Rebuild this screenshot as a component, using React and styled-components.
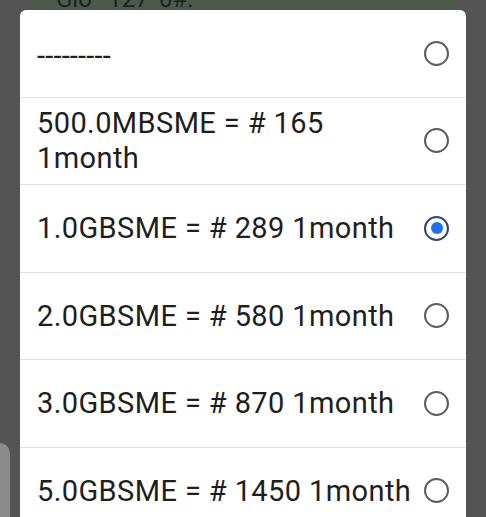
import React, { useState } from "react";
import styled, { createGlobalStyle } from "styled-components";

const Global = createGlobalStyle`
  html, body { margin: 0; padding: 0; background: #545454; }
  * { box-sizing: border-box; }
`;

const Page = styled.div`
  position: relative;
  width: 486px;
  height: 517px;
  overflow: hidden;
  background: #545454;
  font-family: Roboto, "Noto Sans", sans-serif;
`;

const Backdrop = styled.div`
  display: flex;
  flex-direction: column;
  gap: 13px;
`;

const BehindCard = styled.div`
  margin: 0 31px 0 32px;
  height: 430px;
  background: #4a5a4c;
  overflow: hidden;
`;

const BehindText = styled.div`
  margin: -15px 0 0 24px;
  font-size: 24px;
  line-height: 28px;
  color: #1c241d;
`;

const SideTab = styled.div`
  width: 10px;
  height: 90px;
  background: #8a8a8a;
  border-top-right-radius: 14px;
`;

const Dialog = styled.div`
  position: absolute;
  top: 10px;
  left: 20px;
  width: 446px;
  background: #ffffff;
  border-radius: 6px 6px 0 0;
  display: flex;
  flex-direction: column;
`;

const Row = styled.label`
  display: flex;
  align-items: center;
  gap: 10px;
  height: 87.5px;
  padding: 0 17px 0 17px;
  border-bottom: 1px solid ${(p) => (p.$last ? "transparent" : "#e2e2e2")};
  cursor: pointer;
`;

const Label = styled.span`
  flex: 1;
  font-size: 29px;
  line-height: 34.5px;
  color: #1e1e1e;
  letter-spacing: 0.4px;
`;

const Dashes = styled(Label)`
  letter-spacing: 0.2px;
  padding-top: 6px;
`;

const Radio = styled.span`
  flex: 0 0 auto;
  width: 25px;
  height: 25px;
  border-radius: 50%;
  border: 2.5px solid ${(p) => (p.$on ? "#2f4478" : "#5c5c5c")};
  display: flex;
  align-items: center;
  justify-content: center;
`;

const Dot = styled.span`
  width: 12px;
  height: 12px;
  border-radius: 50%;
  background: #1f6fee;
`;

const options = [
  { id: 0, text: "---------", dash: true },
  { id: 1, text: "500.0MBSME = # 165 1month" },
  { id: 2, text: "1.0GBSME = # 289 1month" },
  { id: 3, text: "2.0GBSME = # 580 1month" },
  { id: 4, text: "3.0GBSME = # 870 1month" },
  { id: 5, text: "5.0GBSME = # 1450 1month" },
];

export default function App() {
  const [sel, setSel] = useState(2);
  return (
    <Page>
      <Global />
      <Backdrop>
        <BehindCard>
          <BehindText>Glo *127*0#.</BehindText>
        </BehindCard>
        <SideTab />
      </Backdrop>
      <Dialog>
        {options.map((o, i) => (
          <Row key={o.id} $last={i === options.length - 1} onClick={() => setSel(o.id)}>
            {o.dash ? <Dashes>{o.text}</Dashes> : <Label>{o.text}</Label>}
            <Radio $on={sel === o.id}>{sel === o.id && <Dot />}</Radio>
          </Row>
        ))}
      </Dialog>
    </Page>
  );
}
